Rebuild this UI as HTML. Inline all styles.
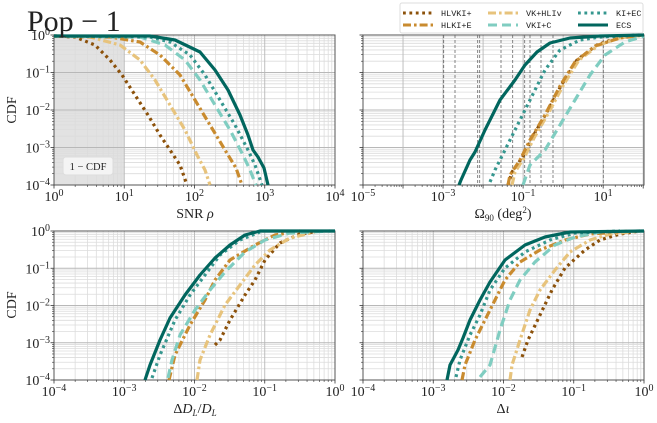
<!DOCTYPE html>
<html><head><meta charset="utf-8">
<style>
html,body{margin:0;padding:0;background:#fff;width:657px;height:423px;overflow:hidden}
svg{display:block}
text{font-family:"Liberation Serif",serif;fill:#222}
.m{font-family:"Liberation Mono",monospace;font-size:8.5px}
</style></head><body>
<svg id="s" width="657" height="423" xmlns="http://www.w3.org/2000/svg"></svg>
<script>
const S=document.getElementById('s');let h='';
const C={brown:'#8c510a',orange:'#c98b2f',light:'#e7c37c',lteal:'#80cdc1',teal:'#35978f',dark:'#01665e'};
const ST={
 hlvki:{c:C.brown,d:'2.8 3.6'},
 hlki:{c:C.orange,d:'8 3 2.6 3'},
 vk:{c:C.light,d:'8 3 2.6 3'},
 vkic:{c:C.lteal,d:'9 5'},
 kiec:{c:C.teal,d:'2.8 3.6'},
 ecs:{c:C.dark,d:''}};
function line(x1,y1,x2,y2,c,w,d){h+=`<line x1="${x1}" y1="${y1}" x2="${x2}" y2="${y2}" stroke="${c}" stroke-width="${w}"${d?` stroke-dasharray="${d}"`:''}/>`;}
function sup(x,y,e,anchor){h+=`<text x="${x}" y="${y}" font-size="14" text-anchor="${anchor||'middle'}">10<tspan font-size="10" dy="-5">${e}</tspan></text>`;}
function panel(x0,x1,y0,y1,d0,d1,labStep,yl,noMinX){
 const nd=d1-d0,px=(x1-x0)/nd;
 if(!noMinX)for(let d=d0;d<Math.ceil(d1);d++)for(let k=2;k<10;k++){const x=x0+(d-d0+Math.log10(k))*px;if(x<x1)line(x,y0,x,y1,'#dcdcdc',0.8);}
 const py=(y1-y0)/4;
 for(let d=0;d<4;d++)for(let k=2;k<10;k++){const y=y0+(d+1-Math.log10(k))*py;line(x0,y,x1,y,'#dcdcdc',0.8);}
 for(let d=0;d<=Math.floor(nd+0.001);d++){const x=x0+d*px;line(x,y0,x,y1,'#b8b8b8',0.9);}
 for(let d=0;d<=4;d++){const y=y0+d*py;line(x0,y,x1,y,'#b8b8b8',0.9);}
 h+=`<rect x="${x0}" y="${y0}" width="${x1-x0}" height="${y1-y0}" fill="none" stroke="#555" stroke-width="1"/>`;
 for(let d=0;d<=Math.floor(nd+0.001);d++){const x=x0+d*px;line(x,y1,x,y1+3.5,'#333',0.8);if(d%labStep==0)sup(x,y1+16,'−'.repeat(d0+d<0?1:0)+Math.abs(d0+d));}
 for(let d=0;d<Math.ceil(d1)-d0;d++)for(let k=2;k<10;k++){const x=x0+(d+Math.log10(k))*px;if(x<x1)line(x,y1,x,y1+2,'#333',0.6);}
 for(let d=0;d<=4;d++){const y=y0+d*py;line(x0-3.5,y,x0,y,'#333',0.8);if(yl)sup(x0-4,y+5,d==0?'0':'−'+d,'end');}
 for(let d=0;d<4;d++)for(let k=2;k<10;k++){const y=y0+(d+1-Math.log10(k))*py;line(x0-2,y,x0,y,'#333',0.6);}
}
function curve(pts,k){const s=ST[k];h+=`<polyline points="${pts.map(p=>p.join(',')).join(' ')}" fill="none" stroke="${s.c}" stroke-width="3.2"${s.d?` stroke-dasharray="${s.d}"`:''} stroke-linejoin="round"/>`;}

h+=`<rect x="54" y="35" width="70" height="150" fill="#cfcfcf" opacity="0.6"/>`;
panel(54,335,35,185,0,4,1,true);
curve([[54,36],[75,37],[95,45],[110,60],[122,75],[135,95],[148,115],[160,135],[170,150],[180,165],[187,185]],'hlvki');
curve([[54,36],[90,37],[120,45],[140,60],[155,80],[170,105],[185,130],[197,155],[205,170],[210,185]],'vk');
curve([[54,36],[110,37],[140,42],[160,55],[180,75],[195,100],[210,125],[225,150],[236,168],[242,185]],'hlki');
curve([[54,36],[140,37],[165,45],[185,60],[200,80],[215,105],[230,130],[243,155],[250,170],[256,185]],'vkic');
curve([[54,36],[150,37],[170,42],[190,55],[205,75],[220,100],[235,125],[248,150],[255,165],[262,185]],'kiec');
curve([[54,36],[150,36],[175,40],[200,52],[215,70],[228,90],[240,115],[248,135],[253,150],[258,157],[264,168],[268,185]],'ecs');
h+=`<rect x="63" y="157" width="50" height="18" rx="3" fill="#f4f4f4" stroke="#ddd"/><text x="88" y="170" font-size="10.5" text-anchor="middle">1 − CDF</text>`;

panel(363,644,35,185,-5,2.02,2,false,true);
[443.7,455,477.7,479.7,501,512.7,524.7,530,541,553,603.3].forEach(x=>line(x,35,x,185,'#666',0.8,'3 2'));
curve([[508,185],[512,172],[522,158],[532,138],[547,112],[562,84],[577,60],[597,45],[617,38],[644,35]],'hlvki');
curve([[512,185],[515,172],[524,158],[534,138],[549,112],[564,84],[579,60],[599,45],[619,38],[644,35]],'vk');
curve([[508,185],[510,175],[520,160],[530,140],[545,115],[560,86],[575,62],[595,46],[620,38],[644,35]],'hlki');
curve([[523,185],[530,165],[545,150],[560,125],[575,100],[590,75],[605,55],[625,42],[644,36]],'vkic');
curve([[490,182],[495,170],[505,150],[515,130],[525,110],[535,90],[545,70],[560,50],[580,40],[600,37],[640,35]],'kiec');
curve([[459,185],[461,180],[470,160],[475,152],[485,130],[500,100],[515,80],[525,65],[537,52],[550,43],[570,38],[600,36],[644,35]],'ecs');

panel(54,335,231,380,-4,0,1,true);
curve([[215,345],[220,340],[230,320],[245,295],[255,280],[265,260],[280,243],[300,234],[320,231]],'hlvki');
curve([[197,380],[200,360],[210,335],[225,305],[240,285],[255,265],[270,250],[290,238],[315,232]],'vk');
curve([[169,380],[175,355],[190,325],[205,300],[215,280],[230,260],[255,245],[275,235],[300,231]],'hlki');
curve([[168,378],[172,360],[180,335],[195,310],[210,290],[225,272],[245,252],[265,240],[290,233],[330,231]],'vkic');
curve([[152,378],[160,355],[175,320],[190,295],[205,275],[220,255],[240,240],[260,232]],'kiec');
curve([[145,380],[150,365],[160,340],[170,318],[185,295],[200,275],[215,258],[230,245],[245,235],[260,231],[335,231]],'ecs');

panel(363,644,231,380,-4,0,1,false);
curve([[522,357],[528,340],[540,315],[552,290],[565,268],[585,250],[600,240],[620,234],[640,231]],'hlvki');
curve([[510,380],[512,365],[520,340],[530,310],[540,290],[555,270],[570,252],[590,240],[610,234],[640,231]],'vk');
curve([[462,380],[465,365],[475,340],[485,320],[495,300],[505,280],[520,262],[540,250],[565,240],[590,234],[630,231]],'hlki');
curve([[480,377],[490,365],[500,330],[510,300],[520,280],[535,262],[555,245],[575,237],[600,232],[640,231]],'vkic');
curve([[456,377],[460,360],[470,335],[480,315],[490,290],[505,268],[525,252],[550,240],[575,233],[620,231]],'kiec');
curve([[447,380],[450,365],[458,350],[463,338],[470,320],[480,300],[490,282],[505,260],[525,245],[545,237],[570,232],[644,231]],'ecs');

h+=`<text x="27" y="31" font-size="30">Pop − 1</text>`;
h+=`<text x="195" y="218" font-size="14" text-anchor="middle">SNR <tspan font-style="italic">ρ</tspan></text>`;
h+=`<text x="503" y="218" font-size="14" text-anchor="middle">Ω<tspan font-size="9" dy="3">90</tspan><tspan dy="-3"> (deg</tspan><tspan font-size="9" dy="-5">2</tspan><tspan dy="5">)</tspan></text>`;
h+=`<text x="195" y="413" font-size="14" text-anchor="middle">Δ<tspan font-style="italic">D</tspan><tspan font-size="9" dy="3" font-style="italic">L</tspan><tspan dy="-3">/</tspan><tspan font-style="italic">D</tspan><tspan font-size="9" dy="3" font-style="italic">L</tspan></text>`;
h+=`<text x="503" y="413" font-size="14" text-anchor="middle">Δ<tspan font-style="italic">ι</tspan></text>`;
h+=`<text transform="translate(16,110) rotate(-90)" font-size="14" text-anchor="middle">CDF</text>`;
h+=`<text transform="translate(16,305) rotate(-90)" font-size="14" text-anchor="middle">CDF</text>`;
h+=`<rect x="400" y="3" width="243" height="30" rx="2" fill="#fff" fill-opacity="0.9" stroke="#ddd"/>`;
const L=[['hlvki','HLVKI+',403,13],['vk','VK+HLIv',488,13],['kiec','KI+EC',578,13],['hlki','HLKI+E',403,25],['vkic','VKI+C',488,25],['ecs','ECS',578,25]];
L.forEach(([k,t,x,y])=>{const s=ST[k];h+=`<line x1="${x}" y1="${y}" x2="${x+30}" y2="${y}" stroke="${s.c}" stroke-width="3"${s.d?` stroke-dasharray="${s.d}"`:''}/><text class="m" x="${x+38}" y="${y+3}">${t}</text>`;});
S.innerHTML=h;
</script>
</body></html>
